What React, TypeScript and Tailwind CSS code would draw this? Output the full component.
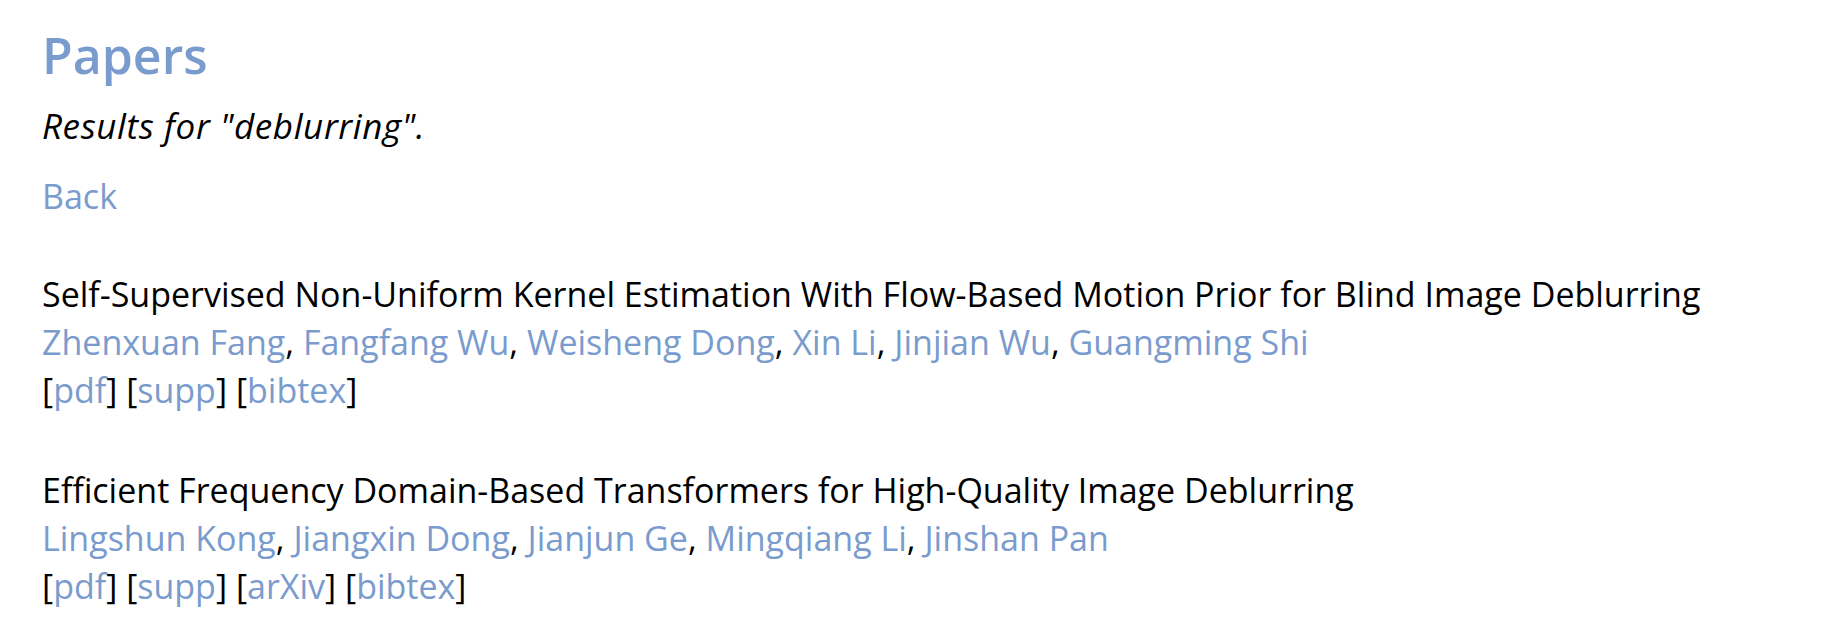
import React from "react";

const L = "text-[#7a9bcd] no-underline";

type Paper = { title: string; authors: string[]; links: string[] };

const papers: Paper[] = [
  {
    title:
      "Self-Supervised Non-Uniform Kernel Estimation With Flow-Based Motion Prior for Blind Image Deblurring",
    authors: ["Zhenxuan Fang", "Fangfang Wu", "Weisheng Dong", "Xin Li", "Jinjian Wu", "Guangming Shi"],
    links: ["pdf", "supp", "bibtex"],
  },
  {
    title: "Efficient Frequency Domain-Based Transformers for High-Quality Image Deblurring",
    authors: ["Lingshun Kong", "Jiangxin Dong", "Jianjun Ge", "Mingqiang Li", "Jinshan Pan"],
    links: ["pdf", "supp", "arXiv", "bibtex"],
  },
];

export default function App() {
  return (
    <div
      className="min-h-[639px] bg-white pl-[42px] pt-[25px] text-black"
      style={{ fontFamily: '"Open Sans", "Noto Sans", sans-serif' }}
    >
      <h1 className="text-[50px] font-semibold leading-[60px] text-[#7a9bcd]">Papers</h1>
      <p className="mt-[17px] text-[35px] italic leading-[48px] tracking-[0.6px]">
        Results for "deblurring".
      </p>
      <div className="mt-[22px] text-[34px] leading-[48px]">
        <a href="#" className={L}>
          Back
        </a>
      </div>
      {papers.map((p, idx) => (
        <div
          key={p.title}
          className={`${idx === 0 ? "mt-[50px]" : "mt-[52px]"} text-[34px] leading-[48px]`}
        >
          <div>{p.title}</div>
          <div>
            {p.authors.map((a, i) => (
              <React.Fragment key={a}>
                <a href="#" className={L}>
                  {a}
                </a>
                {i < p.authors.length - 1 ? ", " : ""}
              </React.Fragment>
            ))}
          </div>
          <div>
            {p.links.map((l, i) => (
              <React.Fragment key={l}>
                [<a href="#" className={L}>{l}</a>]{i < p.links.length - 1 ? " " : ""}
              </React.Fragment>
            ))}
          </div>
        </div>
      ))}
    </div>
  );
}
